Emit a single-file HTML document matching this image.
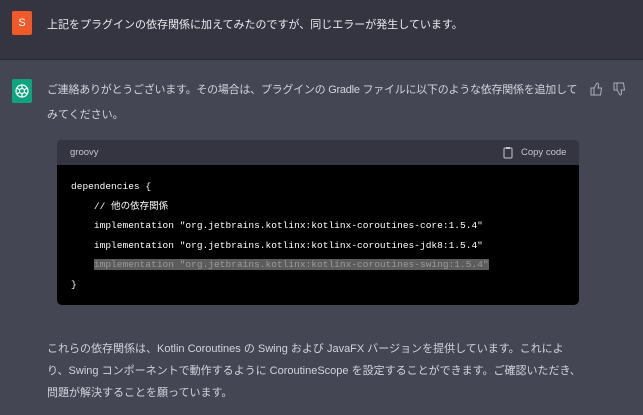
<!DOCTYPE html>
<html><head><meta charset="utf-8"><style>
body{margin:0;width:643px;height:415px;overflow:hidden;background:#444654;font-family:"Liberation Sans","Noto Sans CJK JP",sans-serif;color:#d1d5db;font-size:11px;}
.user{position:absolute;left:0;top:0;width:643px;height:59px;background:#343541;border-bottom:1px solid #2a2b32;}
.av{position:absolute;width:20px;height:24px;border-radius:2px;}
.t{position:absolute;white-space:nowrap;font-size:11px;}
.code{position:absolute;left:57px;top:140px;width:522px;height:165px;background:#000;border-radius:5px;overflow:hidden;}
.hd{height:25px;background:#343541;color:#c5c5d2;font-size:9.5px;position:relative;}
pre{margin:0;font-family:"Liberation Mono","Noto Sans CJK JP",monospace;font-size:9.5px;letter-spacing:0.02px;color:#fff;position:absolute;left:14px;top:37px;line-height:19.5px;}
.hl{background:#5c5c5c;color:#9a9a9a;}
</style></head><body>
<div class="user">
<div class="av" style="left:12px;top:11px;background:#f05a28;color:#fff;font-size:11px;text-align:center;line-height:24px;">S</div>
<div class="t" style="left:47px;top:16px;color:#ececf1;">上記をプラグインの依存関係に加えてみたのですが、同じエラーが発生しています。</div>
</div>
<div class="av" style="left:12px;top:79px;background:#10a37f;">
<svg width="20" height="24" viewBox="0 0 20 24"><g fill="none" stroke="#fff" stroke-width="1.2"><circle cx="10" cy="12" r="6"/><circle cx="10" cy="12" r="2.5"/><path d="M10 6v4M15 9l-3 2M15 15l-3-2M10 18v-4M5 15l3-2M5 9l3 2"/></g></svg></div>
<div class="t" style="left:47px;top:81px;letter-spacing:-0.25px;">ご連絡ありがとうございます。その場合は、プラグインの Gradle ファイルに以下のような依存関係を追加して</div>
<div class="t" style="left:47px;top:106px;">みてください。</div>
<svg style="position:absolute;left:590px;top:82px" width="40" height="14" viewBox="0 0 40 14"><g fill="none" stroke="#acacbe" stroke-width="1"><path d="M1 6h3v7H1zM4 6l3-5c1 0 2 1 1.5 3L8 6h3.5l-1 7H4"/><path d="M24 8h3V1h-3zM27 8l3 5c1 0 2-1 1.5-3L31 8h3.5l-1-7H27"/></g></svg>
<div class="code">
<div class="hd"><span style="position:absolute;left:13px;top:7px;">groovy</span>
<svg style="position:absolute;left:446px;top:6px" width="10" height="13" viewBox="0 0 10 13"><rect x="1" y="2" width="8" height="10" rx="1" fill="none" stroke="#c5c5d2"/><rect x="3" y="1" width="4" height="2" fill="#c5c5d2"/></svg>
<span style="position:absolute;left:464px;top:7px;">Copy code</span></div>
<pre>dependencies {
    // 他の依存関係
    implementation "org.jetbrains.kotlinx:kotlinx-coroutines-core:1.5.4"
    implementation "org.jetbrains.kotlinx:kotlinx-coroutines-jdk8:1.5.4"
    <span class="hl">implementation "org.jetbrains.kotlinx:kotlinx-coroutines-swing:1.5.4"</span>
}</pre>
</div>
<div class="t" style="left:47px;top:340px;">これらの依存関係は、Kotlin Coroutines の Swing および JavaFX バージョンを提供しています。これによ</div>
<div class="t" style="left:47px;top:362px;">り、Swing コンポーネントで動作するように CoroutineScope を設定することができます。ご確認いただき、</div>
<div class="t" style="left:47px;top:384px;">問題が解決することを願っています。</div>
</body></html>
